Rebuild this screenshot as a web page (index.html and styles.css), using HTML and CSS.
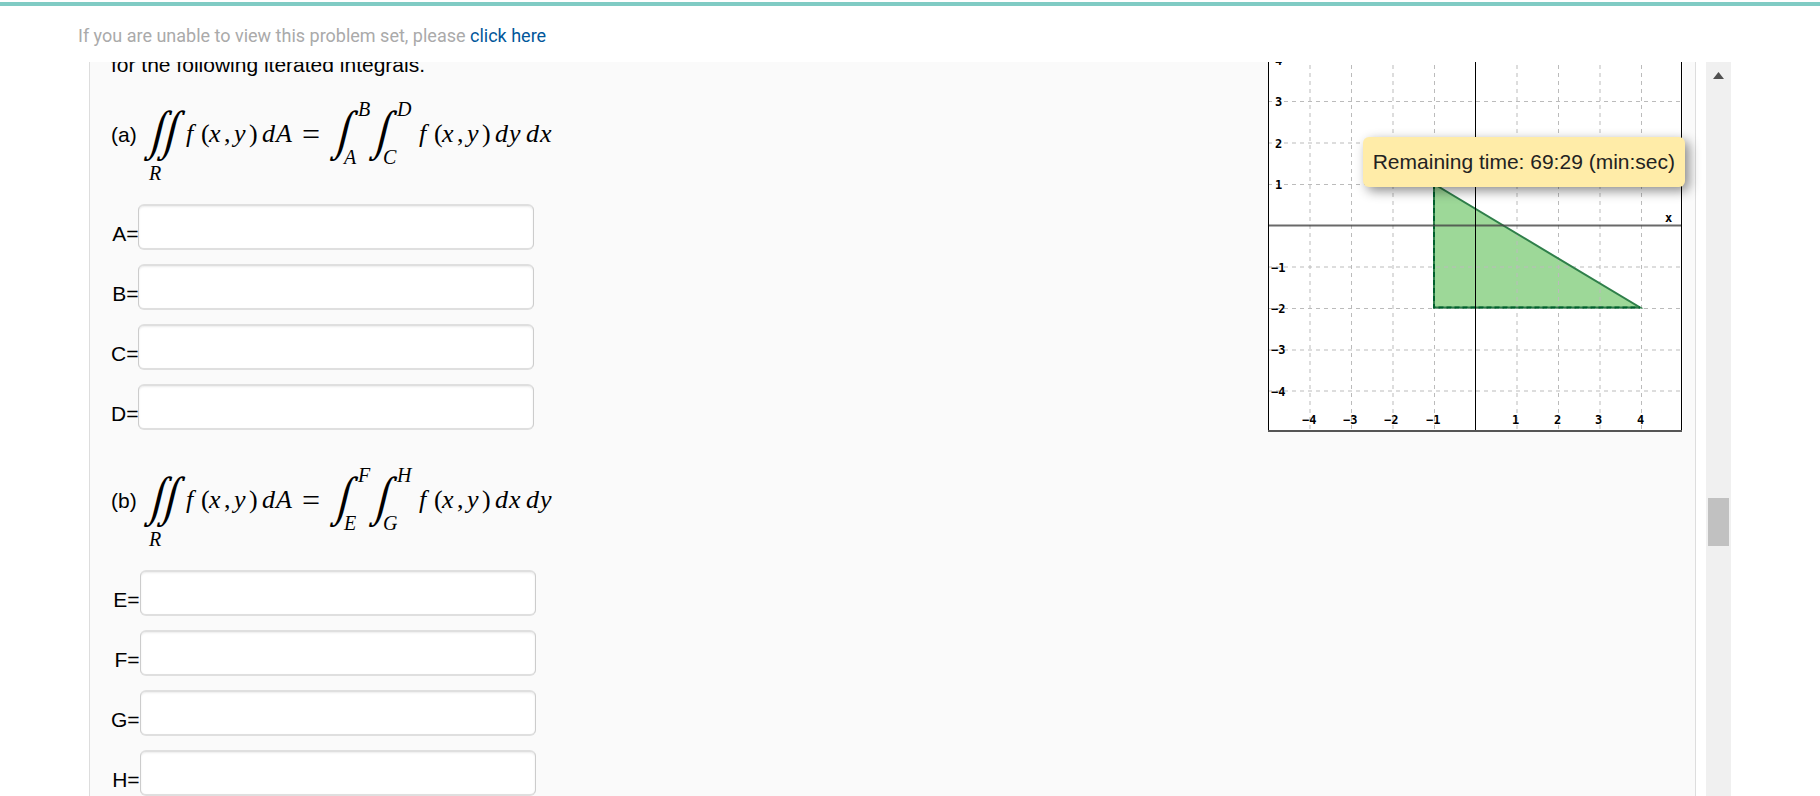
FILE: index.html
```html
<!DOCTYPE html>
<html lang="en">

<head>
    <meta charset="UTF-8">
    <meta name="viewport" content="width=device-width, initial-scale=1.0">
    <title>Problem Set</title>
    <link rel="stylesheet" href="styles.css">
</head>

<body>
    <header>
        <p class="notice">If you are unable to view this problem set, please <a href="#">click here</a></p>
    </header>

    <main class="frame">
        <section class="problem">
            <div class="question">
                <p class="intro">for the following iterated integrals.</p>

                <div class="formula">
                    <span class="part">(a)</span>
                    <span class="double">
                        <span class="signs"><math class="int" displaystyle="true"><mo lspace="0" rspace="0">∫</mo></math><math class="int" displaystyle="true"><mo lspace="0" rspace="0">∫</mo></math></span>
                        <span class="region">R</span>
                    </span>
                    <span class="expr"><i class="f">f</i><b>(</b><i class="v">x</i><b class="comma">,</b><i class="v">y</i><b class="close">)</b><i class="d">d</i><i class="area">A</i><b class="eq">=</b></span>
                    <math class="int" displaystyle="true"><mo lspace="0" rspace="0">∫</mo></math>
                    <span class="limits"><i class="upper">B</i><i>A</i></span>
                    <math class="int" displaystyle="true"><mo lspace="0" rspace="0">∫</mo></math>
                    <span class="limits last"><i class="upper">D</i><i>C</i></span>
                    <span class="expr"><i class="f">f</i><b>(</b><i class="v">x</i><b class="comma">,</b><i class="v">y</i><b class="close">)</b><i class="d">d</i><i class="v">y</i><i class="d second">d</i><i class="v">x</i></span>
                </div>

                <div class="fields">
                    <label for="a">A=</label><input type="text" id="a">
                    <label for="b">B=</label><input type="text" id="b">
                    <label for="c">C=</label><input type="text" id="c">
                    <label for="d">D=</label><input type="text" id="d">
                </div>

                <div class="formula">
                    <span class="part">(b)</span>
                    <span class="double">
                        <span class="signs"><math class="int" displaystyle="true"><mo lspace="0" rspace="0">∫</mo></math><math class="int" displaystyle="true"><mo lspace="0" rspace="0">∫</mo></math></span>
                        <span class="region">R</span>
                    </span>
                    <span class="expr"><i class="f">f</i><b>(</b><i class="v">x</i><b class="comma">,</b><i class="v">y</i><b class="close">)</b><i class="d">d</i><i class="area">A</i><b class="eq">=</b></span>
                    <math class="int" displaystyle="true"><mo lspace="0" rspace="0">∫</mo></math>
                    <span class="limits"><i class="upper">F</i><i>E</i></span>
                    <math class="int" displaystyle="true"><mo lspace="0" rspace="0">∫</mo></math>
                    <span class="limits last"><i class="upper">H</i><i>G</i></span>
                    <span class="expr"><i class="f">f</i><b>(</b><i class="v">x</i><b class="comma">,</b><i class="v">y</i><b class="close">)</b><i class="d">d</i><i class="v">x</i><i class="d second">d</i><i class="v">y</i></span>
                </div>

                <div class="fields">
                    <label for="e">E=</label><input type="text" id="e">
                    <label for="f">F=</label><input type="text" id="f">
                    <label for="g">G=</label><input type="text" id="g">
                    <label for="h">H=</label><input type="text" id="h">
                </div>
            </div>

            <svg class="graph" width="415" height="415" viewBox="0 0 415 415">
                <rect width="415" height="415" fill="#fff" />
                <polygon points="166,167 166,291 373,291" fill="#9dd898" />
                <g class="grid">
                    <path d="M42 0V414M83.500 0V414M125 0V414M166.500 0V414M249 0V414M290.500 0V414M332 0V414M373.500 0V414" />
                    <path d="M0 43H414M0 84.500H414M0 126H414M0 167.500H414M0 250H414M0 291.500H414M0 333H414M0 374H414" />
                </g>
                <path class="edge" d="M166 167V290.500H372Z" />
                <path class="edge-dash" d="M166 167V290.500H372" />
                <path d="M0 208.500H414" stroke="#444" stroke-opacity=".8" stroke-width="2" />
                <path d="M207.500 0V414" stroke="#000" />
                <path d="M.5 0V414M413.500 0V414" stroke="#000" />
                <path d="M0 414H414" stroke="#555" stroke-width="2" />
                <g class="labels">
                    <text x="7" y="48">4</text>
                    <text x="7" y="89">3</text>
                    <text x="7" y="131">2</text>
                    <text x="7" y="172">1</text>
                    <text x="3" y="255">−1</text>
                    <text x="3" y="296">−2</text>
                    <text x="3" y="337">−3</text>
                    <text x="3" y="379">−4</text>
                    <text x="34" y="407">−4</text>
                    <text x="75" y="407">−3</text>
                    <text x="116" y="407">−2</text>
                    <text x="158" y="407">−1</text>
                    <text x="244" y="407">1</text>
                    <text x="286" y="407">2</text>
                    <text x="327" y="407">3</text>
                    <text x="369" y="407">4</text>
                    <text x="397" y="205">x</text>
                </g>
            </svg>
        </section>

        <div class="scrollbar">
            <span class="arrow"></span>
            <span class="thumb"></span>
        </div>
    </main>

    <div class="timer">Remaining time: 69:29 (min:sec)</div>
</body>

</html>
```

FILE: styles.css
```css
* {
    box-sizing: border-box;
}

body {
    display: flex;
    flex-direction: column;
    height: 100vh;
    margin: 0;
    overflow: hidden;
    background-color: #fff;
    font-family: "Liberation Sans", Arial, sans-serif;
    font-size: 21px;
    line-height: 24px;
    color: #000;
}

header {
    margin-top: 2px;
    padding: 18px 78px 14px;
    border-top: 4px solid #80cbc4;
}

.notice {
    margin: 0;
    font-family: Roboto, sans-serif;
    font-size: 18px;
    color: #aaa;
}

.notice a {
    color: #01579b;
    text-decoration: none;
}

.frame {
    display: flex;
    flex: 1;
    gap: 10px;
    min-height: 0;
    margin: 0 89px;
}

.problem {
    display: flex;
    flex: 1;
    justify-content: space-between;
    align-items: flex-start;
    overflow: hidden;
    padding: 0 12px 0 21px;
    border: 1px solid #ddd;
    border-width: 0 1px;
    background-color: #fafafa;
}

.question {
    margin-top: -9px;
}

.intro {
    margin: 0 0 24px;
}

/* formulas */
.formula {
    display: flex;
    align-items: flex-start;
    height: 80px;
    font-family: "Liberation Serif", "Times New Roman", serif;
    font-size: 26px;
    line-height: 66px;
    white-space: nowrap;
}

.formula b {
    font-weight: normal;
}

.part {
    width: 34px;
    font-family: "Liberation Sans", Arial, sans-serif;
    font-size: 21px;
    line-height: 68px;
}

.double {
    width: 41px;
}

.signs {
    display: flex;
}

.int {
    width: 13px;
    height: 64px;
    padding-top: 9px;
    font-family: "DejaVu Math TeX Gyre", "Liberation Serif", serif;
    font-size: 34px;
    font-style: italic;
}

.region {
    display: block;
    padding-left: 4px;
    font-size: 20px;
    font-style: italic;
    line-height: 16px;
}

.expr {
    display: flex;
}

.expr .f {
    width: 15px;
}

.expr b {
    width: 8px;
}

.expr .v {
    width: 15px;
}

.expr .comma {
    width: 10px;
}

.expr .close {
    width: 13px;
}

.expr .d {
    width: 14px;
}

.expr .second {
    margin-left: 2px;
}

.expr .area {
    width: 26px;
}

.expr .eq {
    width: 29px;
    font-size: 32px;
}

.limits {
    display: flex;
    flex-direction: column;
    justify-content: space-between;
    width: 26px;
    height: 64px;
    font-size: 20px;
    line-height: 16px;
}

.limits .upper {
    padding-left: 14px;
}

.limits.last {
    width: 36px;
}

/* answer boxes */
.fields {
    display: inline-grid;
    grid-template-columns: max-content 396px;
    row-gap: 14px;
    margin: 23px 0 37px;
}

.fields label {
    align-self: end;
    padding-bottom: 4px;
    text-align: right;
}

.fields input {
    width: 100%;
    height: 46px;
    padding: 5px 8px;
    border: 1px solid #ccc;
    border-top: 2px solid #dfdfdf;
    border-bottom: 2px solid #dfdfdf;
    border-radius: 6px;
    background-color: #fff;
    box-shadow: inset 0 1px 2px rgba(0, 0, 0, 0.08);
    font-size: 20px;
}

/* graph */
.graph {
    flex: none;
    margin-top: -45px;
}

.graph path {
    fill: none;
}

.grid {
    stroke: #bbb;
    stroke-width: 1;
    stroke-dasharray: 4 4;
}

.graph .edge {
    stroke: #2f7f4a;
    stroke-width: 2;
}

.graph .edge-dash {
    stroke: #00602d;
    stroke-width: 2;
    stroke-dasharray: 5 3;
}

.labels {
    font-family: "DejaVu Sans Mono", monospace;
    font-size: 12px;
    font-weight: bold;
}

/* scrollbar */
.scrollbar {
    width: 25px;
    padding: 10px 2px 0;
    background-color: #f0f0f0;
}

.arrow {
    display: block;
    width: 11px;
    height: 7px;
    margin: 0 auto;
    background-color: #505050;
    clip-path: polygon(50% 0, 100% 100%, 0 100%);
}

.thumb {
    display: block;
    height: 48px;
    margin-top: 419px;
    background-color: #c1c1c1;
}

.timer {
    position: absolute;
    top: 137px;
    right: 135px;
    padding: 13px 10px;
    border-radius: 6px;
    background-color: #ffeca8;
    box-shadow: 4px 4px 12px rgba(0, 0, 0, 0.45);
    font-size: 21px;
    color: #222;
}
```
